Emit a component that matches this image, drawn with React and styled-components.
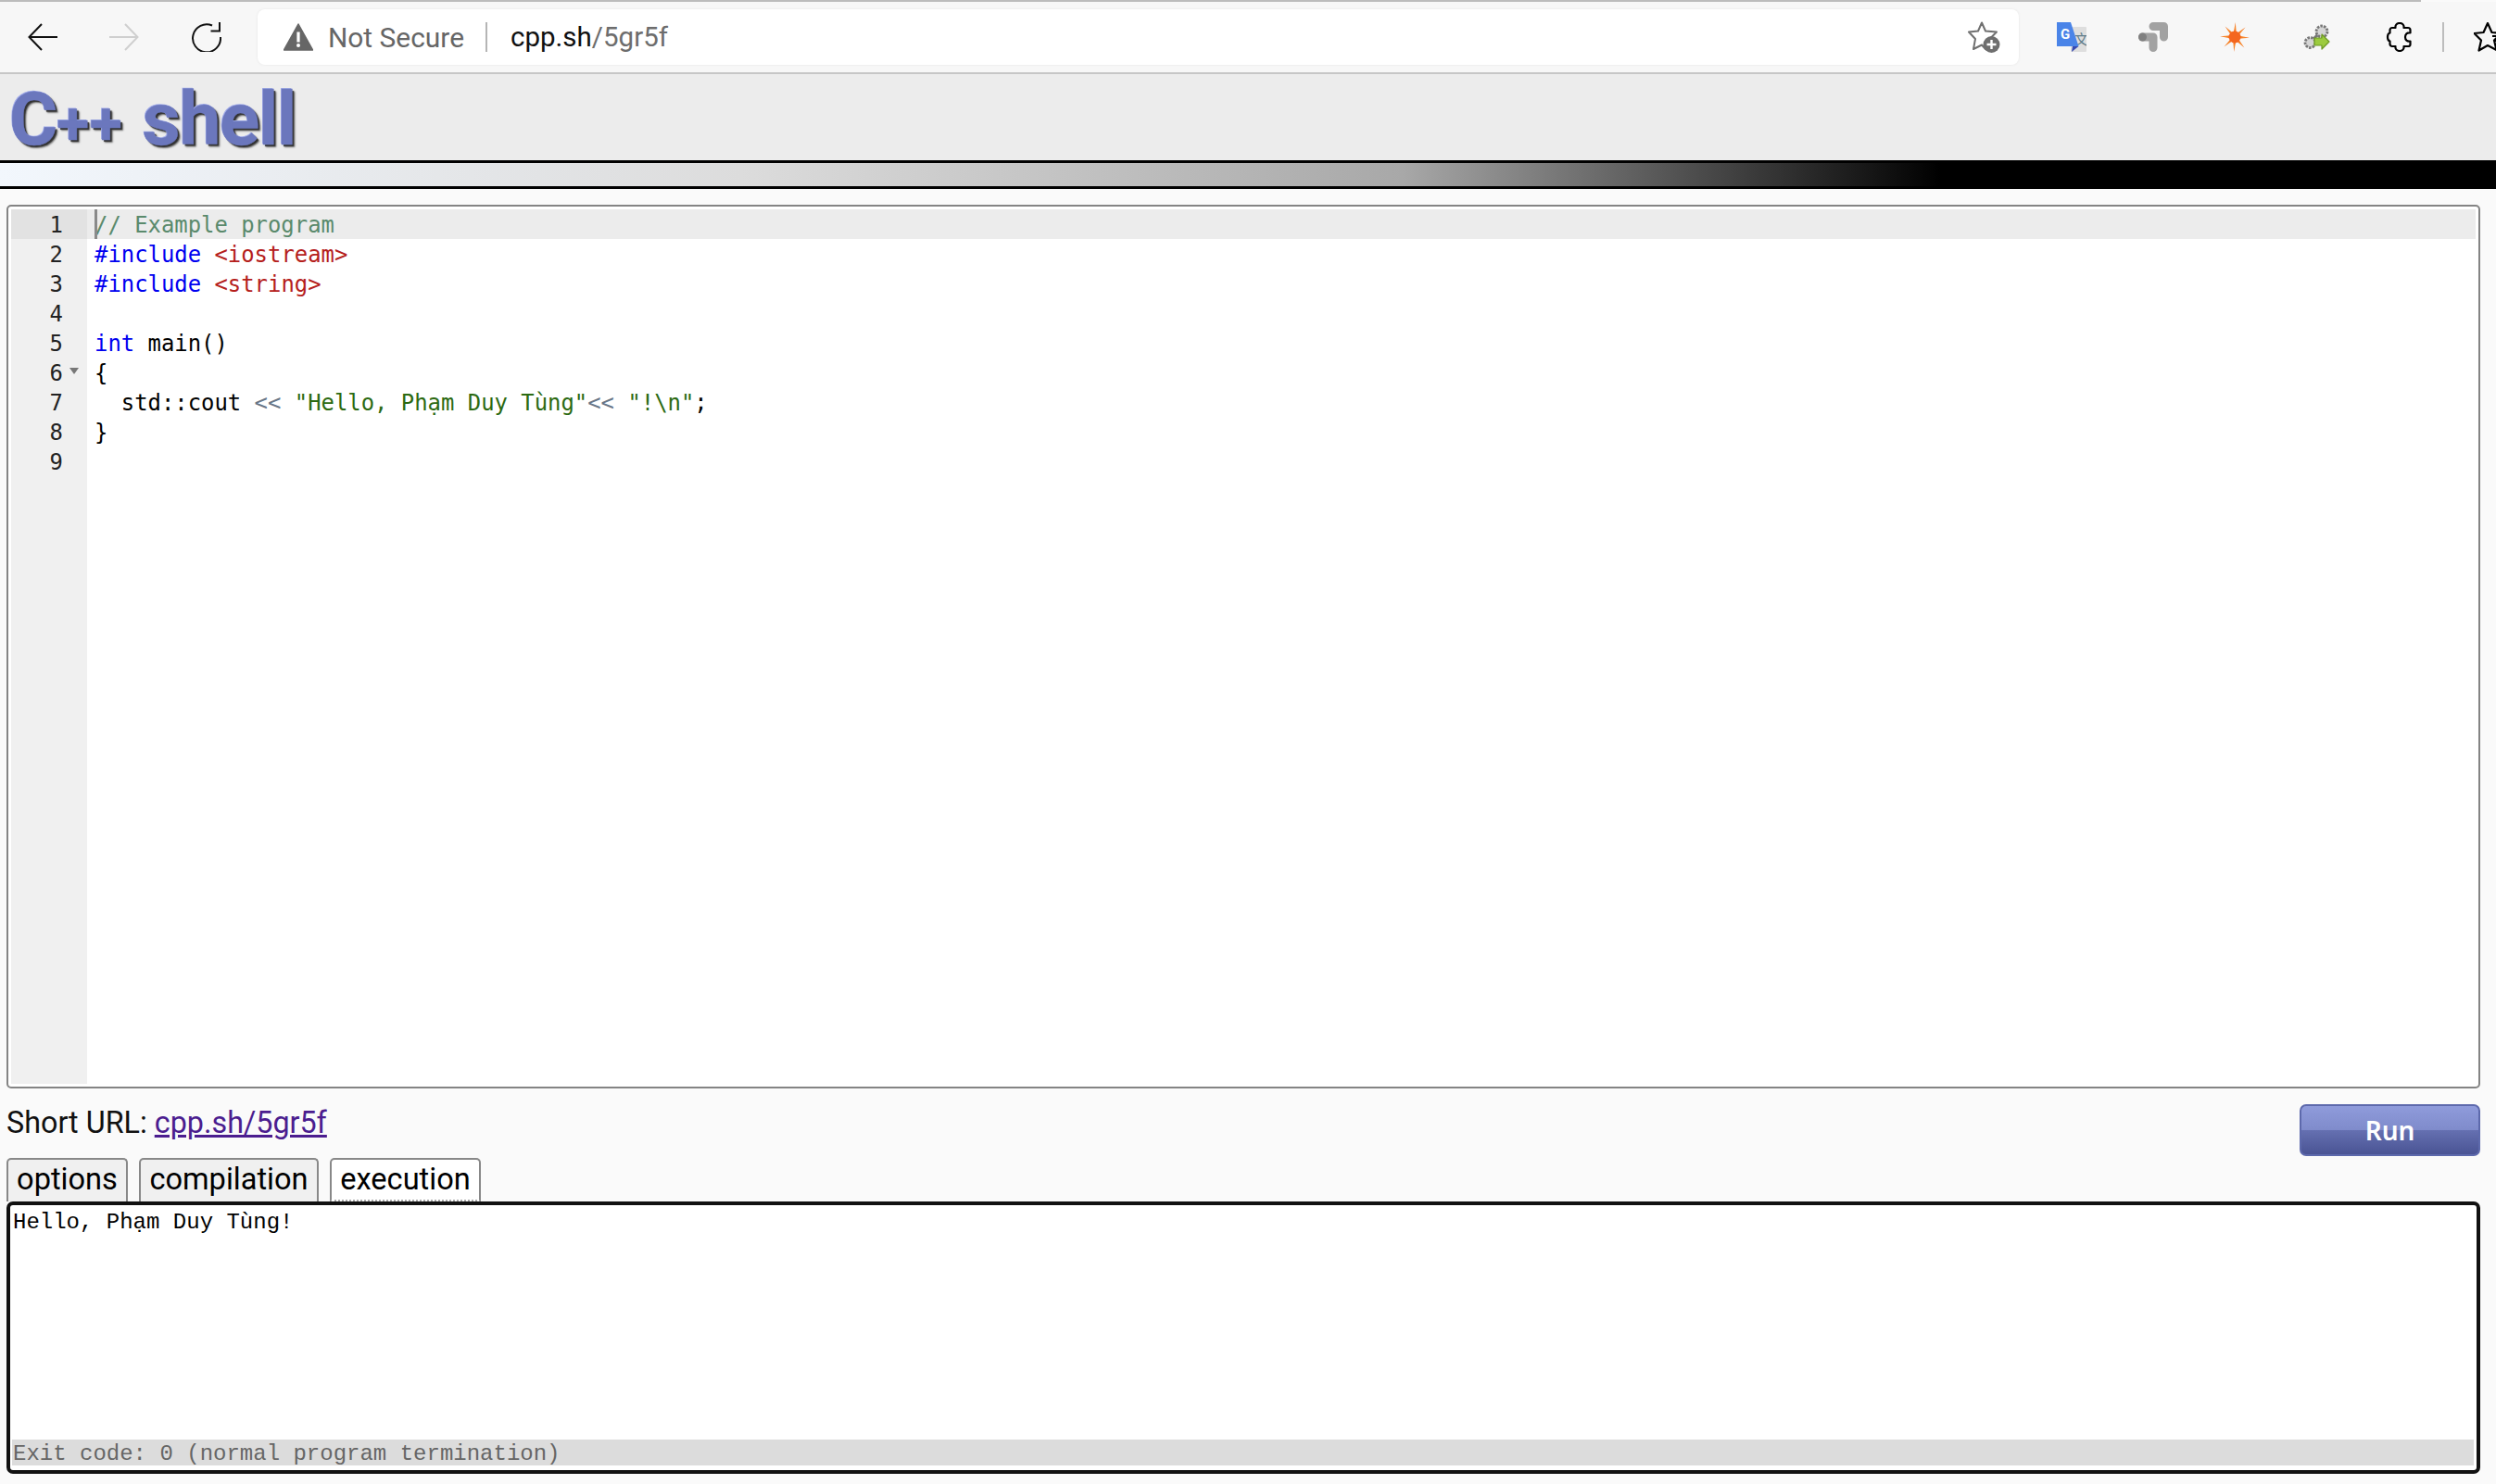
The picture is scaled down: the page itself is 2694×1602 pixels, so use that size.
import React from 'react'
import styled, { createGlobalStyle } from 'styled-components'

const GlobalStyle = createGlobalStyle`
	html, body {
		margin: 0;
		padding: 0;
		background: #fafafa;
		overflow: hidden;
	}
`;

const Page = styled.div`
	width: 2694px;
	height: 1602px;
	overflow: hidden;
	display: flex;
	flex-direction: column;
	font-family: Roboto, sans-serif;
`;

const TopEdge = styled.div`
	height: 2px;
	width: 2613px;
	background: #bcbcbc;
`;

const Toolbar = styled.div`
	height: 76px;
	flex-shrink: 0;
	box-sizing: border-box;
	display: flex;
	align-items: center;
	padding-left: 30px;
	background: #f7f7f7;
`;

const NavButton = styled.div`
	width: 32px;
	height: 32px;
	margin-right: ${props => props.gap}px;
	display: flex;
	align-items: center;
	justify-content: center;
`;

const AddressBar = styled.div`
	width: 1901px;
	height: 60px;
	margin-right: 41px;
	flex-shrink: 0;
	box-sizing: border-box;
	display: flex;
	align-items: center;
	padding: 0 19px 0 28px;
	background: #fff;
	border-radius: 8px;
	box-shadow: 0 0 3px rgba(0, 0, 0, 0.08);
`;

const NotSecure = styled.span`
	margin-left: 16px;
	font-size: 29.9px;
	font-family: Roboto, sans-serif;
	color: #666;
`;

const Separator = styled.div`
	width: 2px;
	height: 32px;
	background: #b5b5b5;
	margin: 0 25px 0 23px;
`;

const Url = styled.span`
	font-size: 29.5px;
	color: #6d6d6d;
	margin-right: auto;

	b {
		font-weight: 400;
		color: #111;
	}
`;

const ExtIcon = styled.div`
	width: 32px;
	height: 32px;
	flex-shrink: 0;
	margin-right: ${props => props.gap ?? 56}px;
`;

// the last toolbar icon runs off the window's right edge
const ClippedIcon = styled.div`
	width: 24px;
	height: 32px;
	flex-shrink: 0;
	overflow: hidden;
`;

const Divider = styled.div`
	width: 2px;
	height: 32px;
	flex-shrink: 0;
	background: #bdbdbd;
	margin-right: 32px;
`;

const ChromeLine = styled.div`
	height: 2px;
	background: #c6c6c6;
`;

const Header = styled.div`
	height: 93px;
	box-sizing: border-box;
	padding: 4px 0 0 10px;
	background: #ececec;
	display: flex;
	align-items: center;
`;

const Logo = styled.div`
	font-family: Roboto, sans-serif;
	font-size: 80px;
	font-weight: 700;
	line-height: 1;
	letter-spacing: -1.2px;
	word-spacing: 2px;
	color: #6b77bd;
	-webkit-text-stroke: 0.5px #6b77bd;
	text-shadow: -1px -1px 0 #a3adea, 2px 2px 1px #333, 3px 3px 2px #777;
`;

const LogoPlus = styled.span`
	font-size: 64px;
	letter-spacing: 1px;
`;

const Band = styled.div`
	height: 25px;
	border-top: 3px solid #000;
	border-bottom: 3px solid #000;
	background: linear-gradient(to right, #f2f7fd 0, #dcdcdc 800px, #a8a8a8 1514px, #000 2095px);
`;

const Main = styled.div`
	flex: 1;
	display: flex;
	flex-direction: column;
	padding: 17px 17px 0 7px;
`;

const Editor = styled.div`
	height: 954px;
	box-sizing: border-box;
	display: flex;
	border: 2px solid #848484;
	border-radius: 5px;
	padding: 3px;
	background: #fff;
`;

const Gutter = styled.div`
	width: 82px;
	flex-shrink: 0;
	background: #f0f0f0;
`;

const GutterCell = styled.div`
	height: 32px;
	position: relative;
	box-sizing: border-box;
	padding: 1px 26px 0 0;
	text-align: right;
	font: 23.9px/32px "DejaVu Sans Mono", monospace;
	color: #222;
	background: ${props => (props.active ? '#e2e2e2' : 'transparent')};
`;

const FoldArrow = styled.span`
	position: absolute;
	right: 9px;
	top: 11px;
	width: 0;
	height: 0;
	border-left: 5px solid transparent;
	border-right: 5px solid transparent;
	border-top: 7px solid #777;
`;

const Code = styled.div`
	flex: 1;
`;

const CodeLine = styled.div`
	height: 32px;
	position: relative;
	box-sizing: border-box;
	padding: 1px 0 0 8px;
	font: 23.9px/32px "DejaVu Sans Mono", monospace;
	white-space: pre;
	color: #000;
	background: ${props => (props.active ? '#ececec' : 'transparent')};
`;

const Caret = styled.span`
	position: absolute;
	left: 8px;
	top: 0;
	width: 3px;
	height: 32px;
	background: #8a8a8a;
`;

const Token = styled.span`
	color: ${props => props.color};
`;

const ActionRow = styled.div`
	height: 58px;
	margin-top: 17px;
	display: flex;
	justify-content: space-between;
	align-items: flex-start;
`;

const ShortUrl = styled.div`
	font-size: 32.3px;
	line-height: 40px;
	color: #111;

	a {
		color: #4b1d8f;
		text-decoration: underline;
	}
`;

const RunButton = styled.button`
	width: 195px;
	height: 56px;
	box-sizing: border-box;
	border: 2px solid #5d69ac;
	border-radius: 7px;
	background: linear-gradient(to bottom, #8f9bdb 0, #7f8bcb 50%, #6570b1 50%, #4a5494 100%);
	color: #fff;
	font: 600 28px "Noto Sans", sans-serif;
`;

const Tabs = styled.div`
	height: 47px;
	display: flex;
	gap: 12px;
`;

const Tab = styled.div`
	box-sizing: border-box;
	width: ${props => props.width}px;
	height: 47px;
	text-align: center;
	font-size: 32.6px;
	line-height: 42px;
	color: #000;
	border: 2px solid #888;
	border-bottom: ${props => (props.active ? '2px dotted #aaa' : 'none')};
	border-radius: 5px 5px 0 0;
	background: ${props => (props.active ? '#fff' : '#f0f0f0')};
`;

const Output = styled.div`
	height: 294px;
	box-sizing: border-box;
	display: flex;
	flex-direction: column;
	justify-content: space-between;
	border: 4px solid #111;
	border-radius: 7px;
	padding: 5px 3px 5px 2px;
	background: #fff;
	font: 24px/28px "Liberation Mono", monospace;
`;

const OutputText = styled.div`
	padding-left: 1px;
	color: #000;
`;

const ExitBar = styled.div`
	height: 28px;
	padding-left: 1px;
	line-height: 31px;
	background: #dcdcdc;
	color: #666;
`;

const BackIcon = ({ color }) => (
	<svg width="32" height="30" viewBox="0 0 32 30" fill="none" stroke={color} strokeWidth="2">
		<path d="M32 15H2M15 1 1.5 15 15 29" />
	</svg>
);

const ForwardIcon = ({ color }) => (
	<svg width="32" height="30" viewBox="0 0 32 30" fill="none" stroke={color} strokeWidth="2">
		<path d="M0 15H30M17 1 30.5 15 17 29" />
	</svg>
);

const ReloadIcon = () => (
	<svg width="32" height="32" viewBox="0 0 32 32" fill="none" stroke="#111" strokeWidth="2">
		<path d="M22 3.5A15 15 0 1 0 31 16" />
		<path d="M30 0V9.5H20.5" />
	</svg>
);

const WarningIcon = () => (
	<svg width="32" height="30" viewBox="0 0 32 30">
		<path d="M16 1 31.5 29H.5Z" fill="#666" stroke="#666" strokeWidth="1.5" strokeLinejoin="round" />
		<rect x="14.4" y="9.5" width="3.2" height="11" fill="#fff" />
		<circle cx="16" cy="24" r="2" fill="#fff" />
	</svg>
);

const StarAddIcon = () => (
	<svg width="36" height="34" viewBox="0 0 36 34" style={{ flexShrink: 0 }}>
		<path
			d="M15 1.5 19 10.5 31 11.5 23.5 19 26 30H19L15 25.5 6 30 8 19 1 11.5 11 10.5Z"
			fill="none"
			stroke="#707070"
			strokeWidth="2"
			strokeLinejoin="round"
		/>
		<circle cx="25.5" cy="25" r="9" fill="#6e6e6e" />
		<path d="M25.5 20V30M20.5 25H30.5" stroke="#fff" strokeWidth="2.4" />
	</svg>
);

const TranslateIcon = () => (
	<svg width="32" height="32" viewBox="0 0 32 32">
		<rect x="15" y="5" width="17" height="27" rx="1" fill="#dedede" />
		<text x="19" y="24" fontSize="15" fontFamily="'Noto Sans CJK SC', sans-serif" fill="#607d8b">文</text>
		<path d="M0 0H15L23.5 26H0Z" fill="#4a84e8" />
		<path d="M17 26H23.5L16 32Z" fill="#3748b0" />
		<text x="4" y="18" fontSize="15" fontWeight="700" fontFamily="Roboto, sans-serif" fill="#fff">G</text>
	</svg>
);

const AnalyticsIcon = () => (
	<svg width="32" height="32" viewBox="0 0 32 32" fill="none" stroke="#a2a2a2" strokeWidth="9" strokeLinecap="round" strokeLinejoin="round">
		<path d="M16 4.5H27.5V16" />
		<path d="M4.5 16H16V27.5" />
		<circle cx="4.5" cy="16" r="4.5" fill="#808080" stroke="none" />
	</svg>
);

const sparklePoints = () => {
	const pts = [];
	for (let i = 0; i < 8; i++) {
		const a = (i / 8) * Math.PI * 2 - Math.PI / 2 + 0.05;
		const b = a + Math.PI / 8;
		const r = i % 2 === 0 ? 16 : 15.5;
		pts.push(`${16 + Math.cos(a) * r},${16 + Math.sin(a) * r}`);
		pts.push(`${16 + Math.cos(b) * 4.2},${16 + Math.sin(b) * 4.2}`);
	}
	return pts.join(' ');
};

const SparkleIcon = () => (
	<svg width="32" height="32" viewBox="0 0 32 32">
		<defs>
			<radialGradient id="spark">
				<stop offset="0" stopColor="#f2541b" />
				<stop offset="0.6" stopColor="#f8892a" />
				<stop offset="1" stopColor="#f47a35" />
			</radialGradient>
		</defs>
		<polygon points={sparklePoints()} fill="url(#spark)" />
		<circle cx="16" cy="16" r="6.5" fill="#f4661f" />
	</svg>
);

const LinkArrowIcon = () => (
	<svg width="32" height="32" viewBox="0 0 32 32">
		<path d="M10 21 21 10" stroke="#777" strokeWidth="3" />
		<circle cx="22" cy="10" r="6" fill="#d5d5d5" stroke="#777" strokeWidth="2.8" strokeDasharray="2.5 1.2" />
		<circle cx="9.5" cy="22" r="5.5" fill="#d5d5d5" stroke="#777" strokeWidth="2.8" strokeDasharray="2.5 1.2" />
		<path d="M14 17H22V13L30 21 22 29V25H14Z" fill="#9ccb3f" stroke="#6d9a22" strokeWidth="1.2" strokeLinejoin="round" />
	</svg>
);

const PuzzleIcon = () => (
	<svg width="32" height="32" viewBox="-4 0 32 32" fill="none" stroke="#000" strokeWidth="2.2" strokeLinejoin="round">
		<path d="M6 6H9.5C9 3 11 1 14 1 17 1 19 3 18.5 6H23C24.5 6 25.5 7 25.5 8.5V11.5C22 11 20 13 20 16 20 19 22 21 25.5 20.5V24C25.5 25 24.5 26 23 26H18.5C19 29 17 31 14 31 11 31 9 29 9.5 26H6C4.5 26 3.5 25 3.5 23.5V20.5C1.5 20 1 18 1 16 1 14 1.5 12 3.5 11.5V8.5C3.5 7 4.5 6 6 6Z" />
	</svg>
);

const FavoritesIcon = () => (
	<svg width="36" height="32" viewBox="0 0 36 32" fill="none" stroke="#000" strokeWidth="2.2" strokeLinejoin="round">
		<path d="M15 1 19.5 11 30 12 22 19.5 24.5 30 15 25 5.5 30.5 8 19.5 .5 12 10.5 11Z" />
		<path d="M20 15H32M23 20H32M23 25H32" />
	</svg>
);

const COMMENT = '#5a8a6c';
const KEYWORD = '#0000f0';
const INCLUDE = '#b5201c';
const STRING = '#2c6a12';
const OPERATOR = '#687687';

const codeLines = [
	[['// Example program', COMMENT]],
	[['#include', KEYWORD], [' '], ['<iostream>', INCLUDE]],
	[['#include', KEYWORD], [' '], ['<string>', INCLUDE]],
	[],
	[['int', KEYWORD], [' main()']],
	[['{']],
	[['  std::cout '], ['<<', OPERATOR], [' '], ['"Hello, Phạm Duy Tùng"', STRING], ['<<', OPERATOR], [' '], ['"!\\n"', STRING], [';']],
	[['}']],
	[],
];

const App = () => {
	return (
		<Page>
			<GlobalStyle />
			<TopEdge />
			<Toolbar>
				<NavButton gap={56}><BackIcon color="#111" /></NavButton>
				<NavButton gap={57}><ForwardIcon color="#cfcfcf" /></NavButton>
				<NavButton gap={39}><ReloadIcon /></NavButton>
				<AddressBar>
					<WarningIcon />
					<NotSecure>Not Secure</NotSecure>
					<Separator />
					<Url><b>cpp.sh</b>/5gr5f</Url>
					<StarAddIcon />
				</AddressBar>
				<ExtIcon><TranslateIcon /></ExtIcon>
				<ExtIcon><AnalyticsIcon /></ExtIcon>
				<ExtIcon><SparkleIcon /></ExtIcon>
				<ExtIcon><LinkArrowIcon /></ExtIcon>
				<ExtIcon gap={32}><PuzzleIcon /></ExtIcon>
				<Divider />
				<ClippedIcon><FavoritesIcon /></ClippedIcon>
			</Toolbar>
			<ChromeLine />
			<Header>
				<Logo>C<LogoPlus>++</LogoPlus> shell</Logo>
			</Header>
			<Band />
			<Main>
				<Editor>
					<Gutter>
						{codeLines.map((_, i) => (
							<GutterCell key={i} active={i === 0}>
								{i + 1}
								{i === 5 && <FoldArrow />}
							</GutterCell>
						))}
					</Gutter>
					<Code>
						{codeLines.map((tokens, i) => (
							<CodeLine key={i} active={i === 0}>
								{i === 0 && <Caret />}
								{tokens.map(([text, color], j) => (
									<Token key={j} color={color}>{text}</Token>
								))}
							</CodeLine>
						))}
					</Code>
				</Editor>
				<ActionRow>
					<ShortUrl>Short URL: <a href="#5gr5f">cpp.sh/5gr5f</a></ShortUrl>
					<RunButton>Run</RunButton>
				</ActionRow>
				<Tabs>
					<Tab width={131}>options</Tab>
					<Tab width={194}>compilation</Tab>
					<Tab width={163} active>execution</Tab>
				</Tabs>
				<Output>
					<OutputText>Hello, Phạm Duy Tùng!</OutputText>
					<ExitBar>Exit code: 0 (normal program termination)</ExitBar>
				</Output>
			</Main>
		</Page>
	)
}

export default App
